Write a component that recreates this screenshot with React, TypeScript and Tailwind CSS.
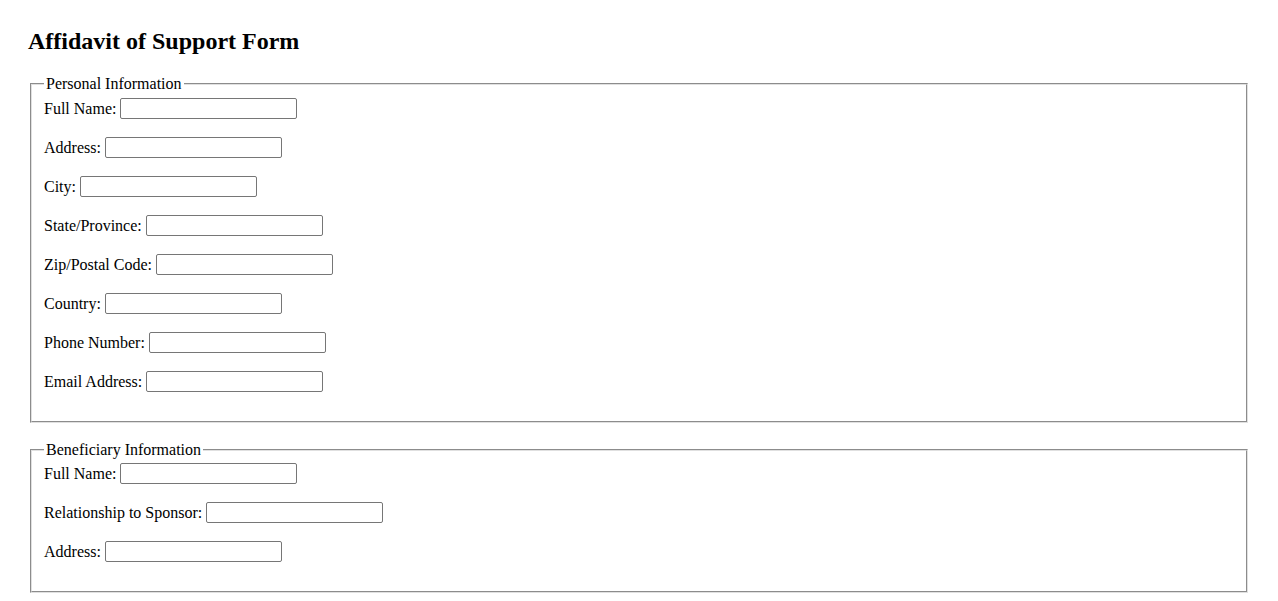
const personal = [
  'Full Name:',
  'Address:',
  'City:',
  'State/Province:',
  'Zip/Postal Code:',
  'Country:',
  'Phone Number:',
  'Email Address:',
]

const beneficiary = ['Full Name:', 'Relationship to Sponsor:', 'Address:']

function Field({ label }: { label: string }) {
  return (
    <div className="flex items-center h-[21px] mb-[18px]">
      <label className="mr-[4px]">{label}</label>
      <input
        type="text"
        className="w-[177px] h-[21px] border border-[#767676] rounded-[2px] px-[2px] text-[13px] bg-white"
      />
    </div>
  )
}

function Section({ title, fields, tight }: { title: string; fields: string[]; tight?: boolean }) {
  return (
    <fieldset
      className={
        'mx-[2px] px-[12px] pb-[11px] border-2 [border-style:groove] border-[#e0e0e0] ' +
        (tight ? 'pt-[4px]' : 'pt-[5px]')
      }
    >
      <legend className="px-[2px] leading-[18px]">{title}</legend>
      {fields.map((f, i) => (
        <Field key={i} label={f} />
      ))}
    </fieldset>
  )
}

export default function App() {
  return (
    <div className="min-h-screen bg-white text-black px-[28px] pt-[27px] pb-[28px] text-[16px] font-['Liberation_Serif',serif]">
      <h2 className="text-[24px] font-bold leading-[28px] mb-[20px]">Affidavit of Support Form</h2>
      <Section title="Personal Information" fields={personal} />
      <div className="h-[18px]" />
      <Section title="Beneficiary Information" fields={beneficiary} tight />
    </div>
  )
}
